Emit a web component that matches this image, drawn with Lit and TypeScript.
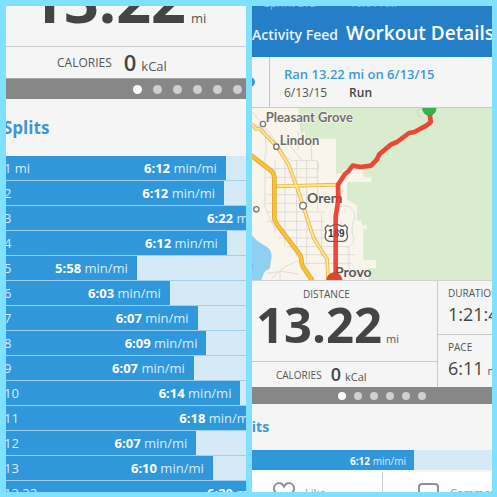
import { LitElement, html, css, svg } from "lit";
import { customElement, property } from "lit/decorators.js";

interface Split {
  label: string;
  pace: string;
  width: number;
}

const SPLITS: Split[] = [
  { label: "1 mi", pace: "6:12", width: 92 },
  { label: "2", pace: "6:12", width: 91.3 },
  { label: "3", pace: "6:22", width: 117 },
  { label: "4", pace: "6:12", width: 92.4 },
  { label: "5", pace: "5:58", width: 56.7 },
  { label: "6", pace: "6:03", width: 69.8 },
  { label: "7", pace: "6:07", width: 80.8 },
  { label: "8", pace: "6:09", width: 84.3 },
  { label: "9", pace: "6:07", width: 79.3 },
  { label: "10", pace: "6:14", width: 97.8 },
  { label: "11", pace: "6:18", width: 106 },
  { label: "12", pace: "6:07", width: 80.3 },
  { label: "13", pace: "6:10", width: 86.8 },
  { label: "13.22", pace: "6:20", width: 117 },
];

@customElement("page-dots")
export class PageDots extends LitElement {
  @property({ type: Number }) count = 6;

  static styles = css`
    :host {
      display: flex;
      align-items: center;
      gap: var(--dot-gap, 8px);
      background: #878787;
    }
    .dot {
      flex: none;
      width: var(--dot-size, 8px);
      height: var(--dot-size, 8px);
      border-radius: 50%;
      background: #cfcfcf;
    }
    .active {
      background: #fff;
    }
  `;

  render() {
    return Array.from(
      { length: this.count },
      (_, i) => html`<span class="dot ${i === 0 ? "active" : ""}"></span>`
    );
  }
}

@customElement("splits-pane")
export class SplitsPane extends LitElement {
  static styles = css`
    :host {
      display: block;
      overflow: hidden;
      background: #f5f5f5;
      color: #555;
    }
    .sheet {
      margin-left: -12px;
    }
    .distance {
      box-sizing: border-box;
      height: 41px;
      padding: 0 0 16px 35px;
      border-bottom: 1px solid #c9cbd0;
      display: flex;
      align-items: last baseline;
      gap: 5px;
      line-height: 1;
    }
    .big {
      font-size: 61px;
      font-weight: 700;
      color: #444;
    }
    .unit {
      font-size: 13px;
    }
    .calories {
      height: 31px;
      display: flex;
      align-items: baseline;
      padding-left: 63px;
      line-height: 31px;
    }
    .caption {
      font-size: 12px;
      margin-right: 12px;
      align-self: center;
    }
    .value {
      font-size: 22px;
      font-weight: 600;
      color: #444;
      margin-right: 5px;
    }
    page-dots {
      height: 20px;
      padding-left: 139px;
      --dot-size: 9px;
      --dot-gap: 11px;
      border-top: 1px solid #a5a5a5;
    }
    h2 {
      margin: 0;
      padding-left: 9px;
      font-size: 17px;
      font-weight: 700;
      line-height: 57px;
      color: #3d97d3;
    }
    ol {
      list-style: none;
      margin: 0;
      padding: 0;
      background: #9fcfee;
    }
    .row {
      display: flex;
      height: 24px;
      margin-bottom: 1px;
      background: #d5e9f7;
    }
    .bar {
      box-sizing: border-box;
      flex: none;
      display: flex;
      justify-content: space-between;
      padding: 0 9px 0 10px;
      background: #3098da;
      color: #d9ecfa;
      font-size: 13px;
      line-height: 24px;
      white-space: nowrap;
    }
    b {
      color: #fff;
    }
  `;

  render() {
    return html`
      <div class="sheet">
        <div class="distance">
          <span class="big">13.22</span><span class="unit">mi</span>
        </div>
        <div class="calories">
          <span class="caption">CALORIES</span>
          <span class="value">0</span><span class="unit">kCal</span>
        </div>
        <page-dots></page-dots>
        <h2>Splits</h2>
        <ol>
          ${SPLITS.map(
            (s) => html`<li class="row">
              <div class="bar" style="width:${s.width}%">
                <span>${s.label}</span><span><b>${s.pace}</b> min/mi</span>
              </div>
            </li>`
          )}
        </ol>
      </div>
    `;
  }
}

@customElement("route-map")
export class RouteMap extends LitElement {
  static styles = css`
    :host {
      display: block;
    }
    .map {
      display: block;
      width: 100%;
      height: 172px;
    }
    .road {
      fill: none;
      stroke: #dddcd8;
      stroke-width: 3;
    }
    .route {
      fill: none;
      stroke: #ec3022;
      stroke-opacity: 0.88;
      stroke-width: 14;
      stroke-linejoin: round;
      stroke-linecap: round;
    }
    .casing {
      fill: none;
      stroke: #e9b545;
    }
    .core {
      fill: none;
      stroke: #fde694;
    }
    .town {
      fill: #fff;
      stroke: #777;
      stroke-width: 4;
    }
    .name {
      font-family: Lato, "Open Sans", sans-serif;
      font-weight: 700;
      fill: #6f6f6f;
      stroke: #faf6ee;
      stroke-width: 4;
      paint-order: stroke;
    }
    .small {
      font-size: 39px;
    }
    .large {
      font-size: 42px;
      fill: #5a5a5a;
    }
    .shield-text {
      font: 700 30px "Liberation Sans", sans-serif;
      fill: #333;
      text-anchor: middle;
    }
  `;

  render() {
    return svg`
      <svg class="map" viewBox="21 24 720 516" preserveAspectRatio="xMinYMin slice" role="img" aria-label="Route map">
        <rect x="0" y="0" width="2400" height="600" fill="#f9f5ed" />
        <path fill="#d9ecce" d="M160 24 L165 95 L180 95 L180 116 L273 116 L273 220 L292 220 L292 208 L318 208 L325 196 L350 205 L357 232 L379 232 L379 246 L306 246 L306 300 L336 316 L336 362 L350 362 L350 376 L365 376 L365 388 L355 388 L355 480 L393 480 L393 504 L370 504 L370 540 H2400 V24 Z" />
        <path fill="#8fd0f2" stroke="#7fbfdf" stroke-width="2" d="M18 404 Q36 428 66 442 Q84 456 76 484 L73 505 Q56 512 52 528 L45 545 H18 Z" />
        <path fill="#5fa3c8" d="M18 486 l4 4 v20 l-4 4 Z" />
        <path class="road" d="M22 36 Q70 90 110 150 Q125 180 145 182 H215 Q226 195 216 215 M90 182 V400 M120 182 V440 M155 182 V470 M185 182 V500 M218 182 V330 M60 160 V320 L90 390 M65 206 H218 M65 232 H218 M65 284 H200 M65 310 H190 M65 336 H240 M65 364 H240 M90 390 H240 M100 414 H240 M125 440 H310 M150 464 H330 M165 490 H320 M230 340 V470 M170 50 V110 M120 120 L170 180 M290 320 Q325 310 330 350 Q318 380 322 400 Q336 435 305 444 M312 444 V520 M66 520 L110 514 L160 522 M80 535 L120 500 L165 480 M105 516 V540 M22 70 L60 90 L64 160 M160 95 V150 M200 116 V180" />
        <path class="casing" stroke-width="11" d="M22 72 L32 86 L44 86 L94 138 L130 192 L158 268 L206 414 L246 478 L250 540 M93 259 L280 254" />
        <path class="core" stroke-width="6" d="M22 72 L32 86 L44 86 L94 138 L130 192 L158 268 L206 414 L246 478 L250 540 M93 259 L280 254" />
        <path fill="none" stroke="#e0a529" stroke-width="14" stroke-linejoin="round" d="M18 166 L78 212 Q88 220 88 238 V356 Q90 366 98 376 L160 458 Q170 468 170 490 Q174 504 182 512 L202 542" />
        <path fill="none" stroke="#fac334" stroke-width="9" stroke-linejoin="round" d="M18 166 L78 212 Q88 220 88 238 V356 Q90 366 98 376 L160 458 Q170 468 170 490 Q174 504 182 512 L202 542" />
        <path fill="none" stroke="#bccfb2" stroke-width="2" d="M540 24 L518 30 V46 L530 52" />
        <text class="name large" x="186" y="309">Orem</text>
        <text class="name large" x="270" y="530">Provo</text>
        <path fill="#fff" stroke="#666" stroke-width="4" d="M248 376 Q256 382 264 376 Q274 370 284 376 Q293 382 300 375 L308 384 Q302 394 307 404 Q310 420 296 424 H252 Q238 420 241 404 Q246 394 240 384 Z" />
        <text class="shield-text" x="274" y="410">189</text>
        <path class="route" d="M272 526 V350 L280 300 L279 254 L300 222 L310 214 L323 197 L347 201 L378 197 L396 178 L403 163 L437 134 L456 126 L492 99 L508 96 L545 76 L557 66 L554 40" />
        <circle cx="553" cy="26" r="20" fill="#35b24a" stroke="#2f9e41" stroke-width="2" />
        <circle cx="268" cy="541" r="23" fill="#df4526" stroke="#b9391f" stroke-width="2" />
        <circle class="town" cx="54" cy="72" r="8" />
        <circle class="town" cx="94" cy="140" r="8" />
        <circle class="town" cx="174" cy="317" r="10" />
        <circle class="town" cx="34" cy="328" r="8" />
        <text class="name small" x="62" y="67">Pleasant Grove</text>
        <text class="name small" x="104" y="135">Lindon</text>
      </svg>
    `;
  }
}

@customElement("workout-pane")
export class WorkoutPane extends LitElement {
  static styles = css`
    :host {
      display: block;
      overflow: hidden;
      background: #f5f5f5;
      color: #555;
      white-space: nowrap;
    }
    header {
      background: #247fc8;
      color: #fff;
      height: 51px;
      overflow: hidden;
    }
    .status {
      display: flex;
      gap: 34px;
      height: 2px;
      padding-left: 12px;
      font-size: 11px;
      align-items: flex-end;
      line-height: 10px;
      color: #8fc0e8;
    }
    .nav {
      display: flex;
      align-items: baseline;
      gap: 8px;
      line-height: 50px;
    }
    .back {
      color: #e8f3fc;
      text-decoration: none;
      font-size: 14px;
      font-weight: 600;
    }
    h1 {
      margin: 0;
      font-size: 19px;
      font-weight: 600;
    }
    .summary {
      display: flex;
      height: 50px;
      border-bottom: 1px solid #c5cfc0;
    }
    .avatar {
      flex: none;
      box-sizing: border-box;
      width: 18px;
      border-right: 1px solid #c4c4c4;
      display: flex;
      align-items: center;
    }
    .avatar::before {
      content: "";
      width: 10px;
      height: 10px;
      margin-left: -7px;
      border-radius: 50%;
      background: #3d97d3;
    }
    .about {
      padding: 8px 0 0 14px;
    }
    .title {
      display: block;
      color: #3d9bd8;
      text-decoration: none;
      font-size: 13px;
      font-weight: 600;
      line-height: 19px;
    }
    .meta {
      display: flex;
      gap: 22px;
      font-size: 12px;
      line-height: 17px;
    }
    .meta b {
      font-weight: 600;
      color: #444;
    }
    .stats {
      display: grid;
      grid-template-columns: 186px 1fr;
      grid-template-rows: 106px;
      border-top: 1px solid #d0d0d0;
    }
    .left {
      border-right: 1px solid #c9c9cc;
    }
    .distance {
      box-sizing: border-box;
      height: 81px;
      border-bottom: 1px solid #c9c9cc;
      padding: 4px 0 0 4px;
    }
    .caption {
      font-size: 10px;
      line-height: 18px;
    }
    .distance .caption {
      padding-left: 47px;
    }
    .big {
      font-size: 49px;
      font-weight: 700;
      color: #444;
    }
    .amount {
      display: flex;
      align-items: baseline;
      gap: 4px;
      line-height: 42px;
    }
    .unit {
      font-size: 11px;
    }
    .calories {
      display: flex;
      align-items: baseline;
      height: 25px;
      padding-left: 24px;
    }
    .calories .caption {
      margin-right: 9px;
      align-self: center;
    }
    .value {
      font-size: 18px;
      font-weight: 600;
      line-height: 24px;
      color: #444;
      margin-right: 4px;
    }
    .cell {
      box-sizing: border-box;
      height: 53px;
      padding: 3px 0 0 10px;
    }
    .cell + .cell {
      border-top: 1px solid #c9c9cc;
    }
    .cell .value {
      font-weight: 500;
    }
    page-dots {
      height: 17px;
      padding-left: 86px;
    }
    h2 {
      margin: 0 0 0 -21px;
      font-size: 14px;
      font-weight: 700;
      line-height: 46px;
      color: #3d97d3;
    }
    .track {
      background: #d5e9f7;
      height: 20px;
    }
    .bar {
      box-sizing: border-box;
      width: 67.5%;
      height: 20px;
      padding-right: 8px;
      text-align: right;
      background: #3098da;
      color: #d9ecfa;
      font-size: 10px;
      line-height: 22px;
    }
    .bar b {
      color: #fff;
    }
    .actions {
      display: grid;
      grid-template-columns: 130px 1fr;
      margin-top: 2px;
      background: #fff;
      height: 40px;
    }
    button {
      display: flex;
      align-items: center;
      gap: 10px;
      border: 0;
      background: none;
      padding: 0 0 0 21px;
      font: inherit;
      font-size: 11px;
      color: #999;
    }
    button + button {
      border-left: 1px solid #ccc;
      padding-left: 35px;
    }
    .icon {
      flex: none;
      width: 22px;
      height: 22px;
      fill: none;
      stroke: #929292;
      stroke-width: 2;
    }
  `;

  render() {
    return html`
      <header>
        <div class="status"><span>Sprint LTE</span><span>10:01 AM</span></div>
        <nav class="nav">
          <a class="back" href="#feed">Activity Feed</a>
          <h1>Workout Details</h1>
        </nav>
      </header>
      <section class="summary">
        <div class="avatar"></div>
        <div class="about">
          <a class="title" href="#workout">Ran 13.22 mi on 6/13/15</a>
          <div class="meta"><span>6/13/15</span><b>Run</b></div>
        </div>
      </section>
      <route-map></route-map>
      <section class="stats">
        <div class="left">
          <div class="distance">
            <div class="caption">DISTANCE</div>
            <div class="amount">
              <span class="big">13.22</span><span class="unit">mi</span>
            </div>
          </div>
          <div class="calories">
            <span class="caption">CALORIES</span>
            <span class="value">0</span><span class="unit">kCal</span>
          </div>
        </div>
        <div>
          <div class="cell">
            <div class="caption">DURATION</div>
            <span class="value">1:21:47</span>
          </div>
          <div class="cell">
            <div class="caption">PACE</div>
            <span class="value">6:11</span><span class="unit">min/mi</span>
          </div>
        </div>
      </section>
      <page-dots></page-dots>
      <h2>Splits</h2>
      <div class="track">
        <div class="bar"><b>6:12</b> min/mi</div>
      </div>
      <section class="actions">
        <button>
          <svg class="icon" viewBox="0 0 22 22">
            <path d="M11 19 C6 15 1 12 1 7.500 C1 4 3.500 2 6 2 C8.500 2 10 3.500 11 5.500 C12 3.500 13.500 2 16 2 C18.500 2 21 4 21 7.500 C21 12 16 15 11 19 Z" />
          </svg>
          Like
        </button>
        <button>
          <svg class="icon" viewBox="0 0 22 22">
            <path d="M4 3 H17 Q20 3 20 6 V13 Q20 16 17 16 H11 L7 20 V16 H4 Q1 16 1 13 V6 Q1 3 4 3 Z" />
          </svg>
          Comment
        </button>
      </section>
    `;
  }
}

@customElement("app-root")
export class AppRoot extends LitElement {
  static styles = css`
    :host {
      box-sizing: border-box;
      display: grid;
      grid-template-columns: 1fr 1fr;
      grid-template-rows: minmax(0, 1fr);
      gap: 6px;
      height: 100vh;
      padding: 6px 5px 5px 6px;
      background: #7fe0ff;
      font-family: "Open Sans", "Noto Sans", sans-serif;
    }
    splits-pane,
    workout-pane {
      min-width: 0;
    }
  `;

  render() {
    return html`<splits-pane></splits-pane><workout-pane></workout-pane>`;
  }
}
